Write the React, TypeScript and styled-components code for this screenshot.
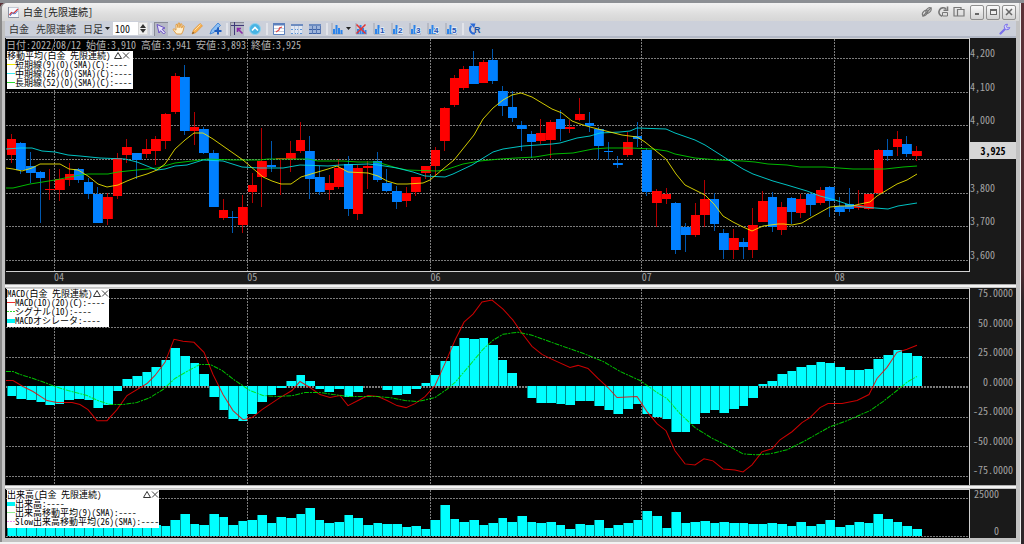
import React from "react";
import styled, { createGlobalStyle } from "styled-components";

const MONO = '"Noto Sans Mono CJK JP", "Noto Sans CJK JP", "Liberation Mono", monospace';

const GlobalStyle = createGlobalStyle`
  * { box-sizing: border-box; }
  body { margin: 0; background: #2b2226; font-family: ${MONO}; font-size: 10px; line-height: 10px; }
  button, input, select { font: inherit; color: inherit; margin: 0; padding: 0; border: 0; background: none; border-radius: 0; }
  svg { display: block; }
`;

const Desktop = styled.div`
  min-height: 100vh;
  display: flex;
  flex-direction: column;
  padding-right: 3px;
  background: linear-gradient(#5b3238, #4a2a30 270px, #2d2629 300px);
  border-top: 3px solid #8c8f94;
`;
const Window = styled.main`
  flex: 1;
  display: flex;
  flex-direction: column;
  padding: 0 5px 4px;
  background: #c2c2c2;
  box-shadow: inset 2px 0 #8a8a8a, inset -1px 0 #ececec;
  border-bottom: 2px solid #f2f2f2;
  border-top-left-radius: 6px;
`;
const TitleBar = styled.header`
  height: 18px;
  display: flex;
  align-items: center;
  margin: 0 -3px;
  padding: 0 3px 0 6px;
  border-top-left-radius: 5px;
  background: linear-gradient(#f2f2f2, #dedede 60%, #d6d6d6);
  color: #222;
`;
const Title = styled.h1`
  flex: 1;
  margin: 0 0 0 4px;
  font-size: 10px;
  line-height: 12px;
  font-weight: 400;
`;
const TitleTools = styled.div`
  display: flex;
  gap: 4px;
  margin-right: 5px;
`;
const PlainButton = styled.button`
  display: block;
  width: 12px;
  height: 12px;
`;
const WindowButtons = styled.div`
  display: flex;
  gap: 2px;
`;
const WindowButton = styled.button`
  display: grid;
  place-items: center;
  width: 14px;
  height: 15px;
  border: 1px solid #8f8f8f;
  border-radius: 2px;
  background: linear-gradient(#fafafa, #d2d2d2);
`;

const Toolbar = styled.div`
  height: 17px;
  display: flex;
  align-items: center;
  padding: 0 5px 0 4px;
  background: #ccd0da;
  border-bottom: 2px solid #b2b8c6;
  color: #333;
`;
const TextButton = styled.button`
  margin-right: 7px;
  white-space: nowrap;
`;
const Period = styled.label`
  display: flex;
  align-items: center;
  gap: 2px;
  margin-right: 3px;
`;
const PeriodSelect = styled.select`
  appearance: none;
  width: 20px;
  height: 12px;
`;
const CountInput = styled.input`
  width: 25px;
  height: 13px;
  padding: 0 2px;
  background: #fff;
  color: #111;
`;
const Spinner = styled.div`
  display: grid;
  width: 10px;
  height: 13px;
  border: 1px solid #d8d8d8;
  background: #eeeeee;
`;
const SpinButton = styled.button`
  display: grid;
  place-items: center;
`;
const Divider = styled.span`
  flex: none;
  width: 2px;
  height: 12px;
  margin: 0 2px;
  background: #e2e4ea;
`;
const Tool = styled.button<{ $on?: boolean; $wide?: boolean }>`
  flex: none;
  display: grid;
  grid-auto-flow: column;
  place-items: center;
  width: ${(p) => (p.$wide ? 22 : 18)}px;
  height: 14px;
  ${(p) => p.$on && "background: #b7bac6; box-shadow: inset 1px 1px #8a8c98; width: 14px; margin-right: 2px;"}
`;
const Gap = styled.span`
  flex: 1;
`;

const Panels = styled.div`
  flex: 1;
  display: flex;
  flex-direction: column;
`;
const Panel = styled.section<{ $grow: number }>`
  flex: ${(p) => p.$grow} 0 0;
  display: grid;
  grid-template-columns: 1fr 46px;
  background: #1a1a1a;
`;
const Splitter = styled.div`
  flex: none;
  height: 4px;
  background: linear-gradient(#b0b0b0 1px, #f4f4f4 1px 3px, #c4c4c4 3px);
`;
const PlotColumn = styled.div`
  display: flex;
  flex-direction: column;
  min-width: 0;
  min-height: 0;
`;
const Plot = styled.div<{ $bottom?: boolean }>`
  position: relative;
  flex: 1 1 0;
  min-height: 0;
  background: #000;
  margin-left: 1px;
  border-top: 1px solid #d0d0d0;
  border-right: 1px solid #d0d0d0;
  border-bottom: ${(p) => (p.$bottom ? "1px solid #d0d0d0" : "0")};
`;
const PlotSvg = styled.svg`
  position: absolute;
  inset: 0;
  width: 100%;
  height: 100%;
`;
const Quote = styled.p`
  position: absolute;
  top: 1px;
  left: 0;
  margin: 0;
  color: #b4b4b4;
  white-space: pre;
`;
const Legend = styled.div<{ $top: number; $width: number }>`
  position: absolute;
  top: ${(p) => p.$top}px;
  left: 1px;
  min-width: ${(p) => p.$width}px;
  padding-bottom: 2px;
  background: #fff;
  color: #000;
  font-size: 9px;
  line-height: 9px;
  white-space: pre;
`;
const LegendTitle = styled.div<{ $end: number }>`
  display: flex;
  padding-right: ${(p) => p.$end}px;
`;
const LegendName = styled.span`
  flex: 1;
`;
const LegendButton = styled.button`
  width: 8px;
  height: 9px;
`;
const LegendRow = styled.div`
  display: flex;
  align-items: center;
`;
const Swatch = styled.i<{ $c: string; $kind?: "bar" | "dash" }>`
  flex: none;
  width: 8px;
  height: ${(p) => (p.$kind === "bar" ? 4 : 1)}px;
  background: ${(p) => (p.$kind === "dash" ? `repeating-linear-gradient(90deg, ${p.$c} 0 2px, #fff 2px 3px)` : p.$c)};
`;
const Months = styled.div`
  display: grid;
  grid-template-columns: 49fr 193fr 183fr 211fr 193fr 135fr;
  height: 12px;
  color: #a4a4a4;
`;
const Month = styled.span`
  display: block;
`;
const Axis = styled.div<{ $pad: string; $align?: string }>`
  display: flex;
  flex-direction: column;
  justify-content: space-between;
  padding: ${(p) => p.$pad};
  text-align: ${(p) => p.$align || "left"};
  color: #a4a4a4;
`;
const Tick = styled.span`
  display: block;
  height: 10px;
`;
const PriceSlot = styled.span`
  position: relative;
  height: 10px;
`;
const PriceTag = styled.strong`
  position: absolute;
  left: 0;
  right: 0;
  top: -7px;
  background: #d6d6d6;
  color: #000;
  line-height: 17px;
  text-align: center;
`;

/* [rising, body top, body bottom, high, low] */
const candles: [number, number, number, number, number][] = [
  [1,139,155,134,163],[0,143,170,142,174],[0,166,173,152,183],[0,172,178,171,223],[1,189,190,169,200],
  [1,179,190,169,201],[1,174,180,163,186],[0,169,180,168,183],[0,182,194,178,199],[0,194,223,187,223],
  [1,197,219,193,225],[1,158,196,153,199],[1,147,155,139,163],[0,153,160,153,179],[1,149,154,139,158],
  [1,139,151,136,165],[1,114,141,113,149],[1,76,112,73,114],[0,77,131,65,135],[1,127,131,112,145],
  [0,129,153,127,154],[0,153,207,150,207],[1,210,218,199,220],[0,217,218,211,233],[1,207,225,195,233],
  [1,185,192,173,203],[1,161,177,128,207],[0,165,167,141,172],[1,158,159,158,195],[1,153,159,141,172],
  [1,140,151,122,153],[0,151,179,136,199],[0,177,192,166,195],[1,183,190,175,200],[1,168,187,159,189],
  [0,164,209,156,216],[1,168,214,165,220],[1,166,168,161,189],[0,161,180,152,182],[0,183,191,169,192],
  [0,191,202,186,209],[1,193,201,187,207],[1,177,192,177,196],[1,166,173,166,179],[1,150,166,147,175],
  [1,108,141,107,151],[1,78,105,75,107],[1,69,88,66,90],[0,66,84,51,84],[1,62,83,60,83],
  [0,60,81,49,84],[0,91,106,86,116],[0,107,118,91,122],[0,125,129,121,151],[0,134,142,131,158],
  [1,133,141,119,144],[1,122,140,120,158],[0,119,129,110,141],[1,127,129,120,133],[1,114,120,98,121],
  [0,123,126,112,132],[0,129,146,127,160],[0,151,152,142,160],[0,163,165,156,168],[1,142,155,132,157],
  [0,136,139,122,147],[0,150,192,148,196],[1,191,203,189,227],[1,194,199,188,204],[0,203,250,202,254],
  [0,227,235,223,252],[1,215,235,203,237],[1,199,215,180,227],[0,199,224,193,231],[0,233,250,229,259],
  [1,238,250,229,259],[0,242,247,238,259],[1,225,250,208,258],[1,201,222,191,222],[0,197,227,192,232],
  [1,207,230,202,235],[0,198,212,197,224],[1,199,213,194,218],[0,194,205,193,216],[1,190,203,187,205],
  [0,187,201,186,217],[0,206,212,197,216],[0,204,209,188,212],[1,205,208,190,210],[1,194,209,194,210],
  [1,150,193,149,194],[0,150,156,139,161],[1,139,147,131,156],[0,144,154,136,157],[1,151,156,146,161],
];
const shortMa = "6,168 13,169 22,171 32,168 40,164 60,164 69,169 78,170 88,176 98,184 107,187 118,185 127,181 137,177 147,174 157,170 165,164 175,149 185,140 194,133 203,133 213,139 223,146 233,153 243,160 250,166 263,177 272,181 281,184 291,184 301,177 311,174 328,169 337,166 348,172 368,173 378,176 387,181 397,184 407,184 423,183 430,180 443,169 454,160 474,135 483,119 493,108 503,100 512,95 521,93 532,97 542,103 552,109 562,113 572,121 580,124 590,127 610,132 622,135 637,137 645,142 666,159 676,174 685,185 695,190 705,195 714,204 723,216 733,222 743,227 752,231 763,226 778,224 784,224 792,225 802,223 812,217 830,207 840,206 852,206 860,204 870,202 877,196 887,190 897,184 907,180 917,174";
const middleMa = "6,149 20,148 32,148 42,151 55,152 68,155 80,156 100,158 125,159 137,162 147,166 157,170 165,169 175,166 187,165 203,160 223,161 242,167 260,168 283,168 300,165 328,166 340,165 368,164 378,165 397,168 413,172 425,176 445,177 453,174 472,165 480,160 493,152 503,149 523,146 552,144 560,143 577,138 590,136 600,133 620,132 630,131 637,128 666,129 675,133 695,140 705,145 727,159 743,169 753,174 773,181 787,185 807,191 820,196 835,200 850,205 863,207 888,209 898,206 917,203";
const longMa = "6,188 13,188 30,184 55,180 80,175 88,174 108,174 118,172 137,170 157,168 175,163 192,161 208,159 233,160 260,160 268,159 308,159 318,161 343,161 358,162 377,162 387,165 397,168 407,170 437,171 445,170 463,164 480,161 500,159 516,158 535,157 553,154 573,153 593,149 607,148 630,148 653,149 667,151 675,154 695,158 718,160 743,161 755,162 768,164 787,165 800,167 825,167 853,169 885,169 903,167 917,166";

const oscillator = [
  -9,-12,-13,-15,-18,-17,-13,-12,-13,-21,-18,-4,7,10,14,19,26,38,30,23,12,-10,-23,-32,-34,-27,-15,-8,-1,5,11,5,-2,-5,-2,
  -10,-5,0,0,-3,-8,-7,-2,3,11,25,40,48,47,48,41,26,13,0,-11,-16,-16,-17,-18,-14,-14,-19,-23,-27,-22,-17,-27,-30,-32,-45,
  -45,-37,-26,-23,-26,-22,-19,-11,2,5,12,15,19,21,24,23,19,16,16,17,27,31,36,33,30,
];
const macd = "6,380 13,380 23,386 33,391 47,400 57,402 72,402 80,404 88,409 97,420 107,420 117,409 127,395 147,383 155,375 165,362 174,339 183,341 194,342 204,352 213,374 223,394 233,410 243,419 252,417 262,409 280,397 292,390 300,381 310,387 320,394 330,397 340,395 348,405 358,400 368,395 378,396 387,400 397,405 406,407 415,403 425,396 435,385 445,363 455,340 464,322 473,314 482,302 492,300 503,309 513,320 522,333 532,346 542,354 550,358 570,367 578,365 588,368 598,378 608,387 617,397 637,396 647,411 657,423 666,430 675,450 685,463 695,464 704,458 713,460 723,468 735,469 743,471 752,464 762,451 772,448 780,439 792,431 802,422 810,417 820,407 828,403 842,403 857,400 869,394 877,378 887,367 897,352 907,349 917,345";
const signal = "6,371 13,371 20,374 30,377 42,381 55,386 68,390 87,395 98,400 110,404 122,404 137,402 150,397 163,389 175,378 187,371 200,364 210,364 222,370 235,380 250,390 263,395 277,396 293,395 305,392 320,392 333,394 350,396 377,396 390,397 405,400 418,401 435,397 448,388 455,382 467,368 483,349 493,340 503,334 518,332 532,335 557,344 583,353 603,361 620,371 640,380 657,392 667,398 680,413 695,427 713,438 730,446 743,453 757,454 770,453 787,449 805,440 830,426 847,420 870,410 883,401 897,390 908,381 917,376";

const volume = [
  10,10,10,10,10,10,10,8,10,10,10,10,10,10,10,11,10,16,22,12,11,22,19,11,15,16,21,13,19,18,22,28,16,13,14,
  21,18,11,13,12,12,9,10,7,16,31,17,14,16,11,13,18,14,20,14,13,14,11,7,12,11,16,8,11,13,16,25,20,8,24,
  13,14,15,13,14,13,13,12,12,13,12,10,14,10,12,16,9,11,14,13,22,17,14,10,7,
];

const monthX = [54, 247, 430, 641, 834];
const center = (i: number) => 11.5 + 9.63 * i;

function Grid({ rows, top, bottom }: { rows: number[]; top: number; bottom: number }) {
  return (
    <g stroke="#7c7c7c" strokeDasharray="2 1" shapeRendering="crispEdges">
      {rows.map((y) => <line key={y} x1="6" x2="969" y1={y + 0.5} y2={y + 0.5} />)}
      {monthX.map((x) => <line key={x} x1={x + 0.5} x2={x + 0.5} y1={top} y2={bottom} />)}
    </g>
  );
}

function Candles() {
  return (
    <g>
      {candles.map(([up, top, bottom, high, low], i) => {
        const x = Math.round(center(i) - 4.7);
        return (
          <g key={i} shapeRendering="crispEdges">
            <rect x={x + 4} y={high} width="1" height={low - high} fill={up ? "#b40000" : "#0058b0"} />
            <rect x={x} y={top} width={Math.round(center(i + 1) - 4.7) - x} height={bottom - top} fill={up ? "#d80000" : "#006cd8"} />
            <rect x={x} y={top} width="9" height={bottom - top} fill={up ? "#ff0000" : "#0080ff"} />
          </g>
        );
      })}
    </g>
  );
}

function Bars({ values, base }: { values: number[]; base: number }) {
  return (
    <g shapeRendering="crispEdges">
      {values.map((v, i) => {
        const x = Math.round(center(i) - 4.8);
        const w = Math.round(center(i + 1) - 4.8) - x;
        const y = v > 0 ? base - v : base;
        return (
          <g key={i}>
            <rect x={x} y={y} width={w} height={Math.abs(v)} fill="#008c8c" />
            <rect x={x + 1} y={y} width={w - 1} height={Math.abs(v)} fill="#00ffff" />
          </g>
        );
      })}
    </g>
  );
}

function LegendHead({ name, end }: { name: string; end: number }) {
  return (
    <LegendTitle $end={end}>
      <LegendName>{name}</LegendName>
      <LegendButton aria-label="最小化">
        <svg width="8" height="9" fill="none" stroke="#333"><path d="M4 1.5 7.5 7.5H.5Z" /></svg>
      </LegendButton>
      <LegendButton aria-label="閉じる">
        <svg width="8" height="9" fill="none" stroke="#444"><path d="M1 1.5l6 6M7 1.5l-6 6" /></svg>
      </LegendButton>
    </LegendTitle>
  );
}

const Down = () => <svg width="5" height="3"><path d="M0 0h5L2.500 3z" fill="#222" /></svg>;

const MiniBars = ({ label, crossed }: { label?: string; crossed?: boolean }) => (
  <svg width="12" height="12">
    <path d="M1 0v11h11" fill="none" stroke="#a0a4b0" />
    <path d="M2 6h2v5H2zM4.500 2h2v9h-2zM7 5h2v6H7zM9.500 7h2v4h-2z" fill="#2d84ea" />
    {label && (
      <text x="7" y="10" fontFamily="Liberation Sans, sans-serif" fontSize="8" fontWeight="700" fill="#2452b4" stroke="#dfe8f6" strokeWidth="2" paintOrder="stroke">{label}</text>
    )}
    {crossed && <path d="M1.500 1.500l9 9M10.500 1.500l-9 9" stroke="#e23434" strokeWidth="1.500" />}
  </svg>
);

const TableIcon = ({ solid }: { solid?: boolean }) => (
  <svg width="12" height="12">
    <path d="M0 1h12v10H0z" fill={solid ? "#9db4da" : "#dfe6f2"} />
    <path d="M0 1h12v2H0z" fill="#6d8cc0" />
    <path d="M0 6.500h12M0 10.500h12" stroke={solid ? "#3c62a6" : "#5b93d6"} strokeDasharray={solid ? undefined : "2 1"} />
    <path d="M3.500 3v8M7.500 3v8M11.500 3v8" stroke={solid ? "#5878b4" : "#c2cddf"} />
  </svg>
);

export default function App() {
  return (
    <>
      <GlobalStyle />
      <Desktop>
        <Window>
          <TitleBar>
            <svg width="11" height="11">
              <path d="M.500.500h10v10H.500z" fill="#f6f8fc" stroke="#c3c9d4" />
              <path d="M.500 0v10.500H11" fill="none" stroke="#8b93a4" />
              <path d="M1.500 8l2-2.500 2 1L10 2" fill="none" stroke="#d8383c" strokeWidth="1.300" />
              <path d="M2 9l3-3.500 2 1.500L9.500 4" fill="none" stroke="#5b8bd8" />
            </svg>
            <Title>白金[先限連続]</Title>
            <TitleTools>
              <PlainButton aria-label="連動">
                <svg width="12" height="12" fill="none" stroke="#777" strokeWidth="1.200">
                  <path d="M1.500 10.500L10.500 1.500" />
                  <ellipse cx="4" cy="7" rx="3.200" ry="2" transform="rotate(-45 4 7)" />
                  <ellipse cx="7.500" cy="4.500" rx="3.200" ry="2" transform="rotate(-45 7.500 4.500)" />
                </svg>
              </PlainButton>
              <PlainButton aria-label="更新">
                <svg width="12" height="12" fill="none" stroke="#777" strokeWidth="1.600">
                  <path d="M9 2.800A4.300 4.300 0 1 0 5 10.200M10.500 .5v3.800H6.500" /><path d="M5.500 6.500h5v3.500h-5z" strokeWidth="1" />
                </svg>
              </PlainButton>
              <PlainButton aria-label="複製">
                <svg width="12" height="12" fill="none" stroke="#777" strokeWidth="1.200">
                  <path d="M8 3.500v-2H1v8.500h3M4.500 3.500h6.500v6.500H4.500z" />
                </svg>
              </PlainButton>
            </TitleTools>
            <WindowButtons>
              <WindowButton aria-label="最小化"><svg width="8" height="8"><path d="M2 5h4v2H2z" fill="#666" /></svg></WindowButton>
              <WindowButton aria-label="最大化"><svg width="8" height="8"><path d="M1 1h7v6H1z" fill="#666" /><path d="M2 3h5v3H2z" fill="#eee" /></svg></WindowButton>
              <WindowButton aria-label="閉じる"><svg width="8" height="8"><path d="M1 1l6 6M7 1L1 7" stroke="#666" strokeWidth="1.500" /></svg></WindowButton>
            </WindowButtons>
          </TitleBar>

          <Toolbar>
            <TextButton>白金</TextButton>
            <TextButton>先限連続</TextButton>
            <Period>
              <PeriodSelect aria-label="足種"><option>日足</option></PeriodSelect>
              <Down />
            </Period>
            <CountInput aria-label="本数" defaultValue="100" />
            <Spinner>
              <SpinButton aria-label="増やす"><svg width="6" height="4"><path d="M0 4h6L3 0z" fill="#333" /></svg></SpinButton>
              <SpinButton aria-label="減らす"><svg width="6" height="4"><path d="M0 0h6L3 4z" fill="#333" /></svg></SpinButton>
            </Spinner>
            <Divider />
            <Tool $on aria-label="選択">
              <svg width="12" height="12"><path d="M2 1.500l8 3.500-3 1.200 3.200 3.300-1.500 1.500-3.200-3.300L4 10z" fill="#e6e0fa" stroke="#6a52c4" /></svg>
            </Tool>
            <Tool aria-label="移動">
              <svg width="14" height="13"><path d="M4.500 12L1 7.500l1-.8 2 1.500V2.500l1.200-.3.800 3.500.3-4.700h1.300l.2 4.700L8.800 1.800l1.200.3-.3 4 1.500-2.500 1 .5-1.200 5L9.500 12z" fill="#fff0d0" stroke="#e0973a" strokeWidth=".9" /></svg>
            </Tool>
            <Tool aria-label="線を引く">
              <svg width="13" height="13"><path d="M1 12l1.500-4L9 1.500l2.500 2.300L5 10.500z" fill="#f8b050" stroke="#e08a20" strokeWidth=".6" /><path d="M3.500 8.500L9.500 2.500" stroke="#ffe2a8" /><path d="M1 12l.8-2.300L3.500 11z" fill="#7a5a30" /></svg>
            </Tool>
            <Tool aria-label="線を編集">
              <svg width="13" height="13"><path d="M1 12l1.500-4L9 1l2.500 2.300L5 10.500z" fill="#8ec0f4" stroke="#2e78d0" strokeWidth=".8" /><path d="M9 5.500v7M5.500 9h7" stroke="#1d5dc0" strokeWidth="2" /></svg>
            </Tool>
            <Divider />
            <Tool $on aria-label="十字カーソル">
              <svg width="13" height="13" fill="none"><path d="M3.500 0v13M0 3.500h13" stroke="#3f3a78" /><path d="M6 6l5.500 5.500M6.500 10V6.500H10" stroke="#8a2aa8" strokeWidth="1.500" /></svg>
            </Tool>
            <Tool aria-label="上へ">
              <svg width="12" height="12"><circle cx="6" cy="6" r="5.500" fill="#48b4e4" stroke="#8fd0ee" /><path d="M3 7.500L6 4.500l3 3" fill="none" stroke="#fff" strokeWidth="1.600" /></svg>
            </Tool>
            <Divider />
            <Tool aria-label="チャート表示">
              <svg width="12" height="12"><path d="M.500.500h11v11H.500z" fill="#fff" stroke="#5c80bc" /><path d="M0 0h12v2.500H0z" fill="#5c80bc" /><path d="M1 5.500h10M1 8.500h10" stroke="#c6cedd" /><path d="M3 9l3-2 .5-2L9 4" fill="none" stroke="#e04444" strokeWidth="1.200" /></svg>
            </Tool>
            <Tool aria-label="一覧表示"><TableIcon /></Tool>
            <Tool aria-label="表形式"><TableIcon solid /></Tool>
            <Divider />
            <Tool $wide aria-label="指標"><MiniBars /><Down /></Tool>
            <Tool aria-label="指標を消す"><MiniBars crossed /></Tool>
            {["1", "2", "3", "4", "5"].map((n) => (
              <Tool key={n} aria-label={`指標${n}`}><MiniBars label={n} /></Tool>
            ))}
            <Divider />
            <Tool aria-label="再読込">
              <svg width="12" height="12"><path d="M6 10.500A4.300 4.300 0 0 1 2.500 3" fill="none" stroke="#2a6ad8" strokeWidth="2" /><path d="M1 .5h5.500L5 5z" fill="#2a6ad8" /><text x="5" y="10" fontFamily="Liberation Sans, sans-serif" fontSize="9" fontWeight="700" fill="#1f55a8">R</text></svg>
            </Tool>
            <Gap />
            <PlainButton aria-label="設定">
              <svg width="12" height="12" fill="none"><path d="M1.500 10.500L6 6" stroke="#7a70ec" strokeWidth="2.200" strokeLinecap="round" /><path d="M8.500 1.200A2.800 2.800 0 1 0 10.800 4.500L8.500 5 7.500 3.500z" fill="#d6d4fa" stroke="#7a70ec" /></svg>
            </PlainButton>
          </Toolbar>

          <Panels>
            <Panel $grow={246}>
              <PlotColumn>
                <Plot $bottom>
                  <PlotSvg viewBox="6 39 963 232" preserveAspectRatio="none">
                    <Grid rows={[58, 92, 125, 159, 193, 226, 260]} top={39} bottom={271} />
                    <Candles />
                    <g fill="none" strokeOpacity=".85">
                      <polyline points={longMa} stroke="#00d800" />
                      <polyline points={middleMa} stroke="#00e4e4" />
                      <polyline points={shortMa} stroke="#f4ec00" />
                    </g>
                  </PlotSvg>
                  <Quote>日付:2022/08/12 始値:3,910 高値:3,941 安値:3,893 終値:3,925</Quote>
                  <Legend $top={12} $width={126}>
                    <LegendHead name="移動平均(白金 先限連続)" end={3} />
                    <LegendRow><Swatch $c="#f4ec00" />短期線(9)(0)(SMA)(C):----</LegendRow>
                    <LegendRow><Swatch $c="#40e8f0" />中期線(26)(0)(SMA)(C):----</LegendRow>
                    <LegendRow><Swatch $c="#30d830" />長期線(52)(0)(SMA)(C):----</LegendRow>
                  </Legend>
                </Plot>
                <Months>
                  <span />
                  {["04", "05", "06", "07", "08"].map((m) => <Month key={m}>{m}</Month>)}
                </Months>
              </PlotColumn>
              <Axis $pad="10px 0 24px">
                <Tick>4,200</Tick>
                <Tick>4,100</Tick>
                <Tick>4,000</Tick>
                <PriceSlot><PriceTag>3,925</PriceTag></PriceSlot>
                <Tick>3,800</Tick>
                <Tick>3,700</Tick>
                <Tick>3,600</Tick>
              </Axis>
            </Panel>
            <Splitter />
            <Panel $grow={197}>
              <PlotColumn>
                <Plot>
                  <PlotSvg viewBox="6 289 963 195" preserveAspectRatio="none">
                    <Grid rows={[298, 327, 357, 386, 416, 445, 475]} top={289} bottom={484} />
                    <Bars values={oscillator} base={386} />
                    <g fill="none" strokeOpacity=".85">
                      <polyline points={macd} stroke="#f00000" />
                      <polyline points={signal} stroke="#00e000" strokeDasharray="5 1 2 1" />
                    </g>
                  </PlotSvg>
                  <Legend $top={0} $width={99}>
                    <LegendHead name="MACD(白金 先限連続)" end={0} />
                    <LegendRow><Swatch $c="#f03030" />MACD(10)(20)(C):----</LegendRow>
                    <LegendRow><Swatch $c="#30d830" $kind="dash" />シグナル(10):----</LegendRow>
                    <LegendRow><Swatch $c="#00f4f4" $kind="bar" />MACDオシレータ:----</LegendRow>
                  </Legend>
                </Plot>
              </PlotColumn>
              <Axis $pad="0 3px 10px" $align="right">
                {["75.0000", "50.0000", "25.0000", "0.0000", "-25.0000", "-50.0000", "-75.0000"].map((t) => <Tick key={t}>{t}</Tick>)}
              </Axis>
            </Panel>
            <Splitter />
            <Panel $grow={49}>
              <PlotColumn>
                <Plot>
                  <PlotSvg viewBox="6 490 963 48" preserveAspectRatio="none">
                    <Grid rows={[498, 536]} top={490} bottom={538} />
                    <Bars values={volume} base={536} />
                  </PlotSvg>
                  <Legend $top={0} $width={148}>
                    <LegendHead name="出来高(白金 先限連続)" end={0} />
                    <LegendRow><Swatch $c="#00f4f4" $kind="bar" />出来高:----</LegendRow>
                    <LegendRow><Swatch $c="#90ee90" />出来高移動平均(9)(SMA):----</LegendRow>
                    <LegendRow><Swatch $c="#ee90ee" $kind="dash" />Slow出来高移動平均(26)(SMA):----</LegendRow>
                  </Legend>
                </Plot>
              </PlotColumn>
              <Axis $pad="0 17px 2px 0" $align="right">
                <Tick>25000</Tick>
                <Tick>0</Tick>
              </Axis>
            </Panel>
          </Panels>
        </Window>
      </Desktop>
    </>
  );
}
